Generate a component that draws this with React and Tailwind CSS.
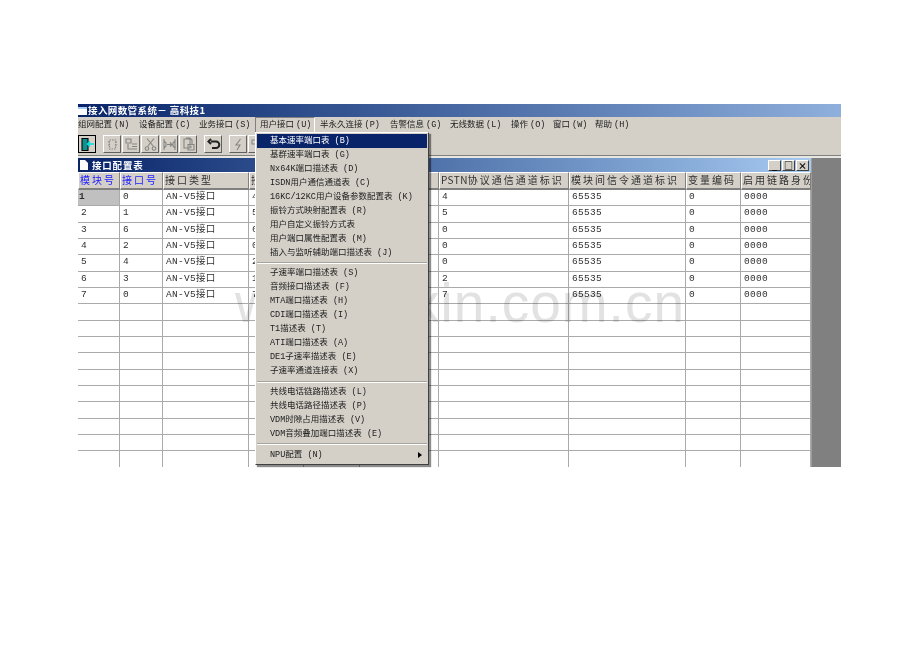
const cols = "grid grid-cols-[42px_43px_86px_55px_56px_79px_130px_117px_55px_70px]";
const headers = [["模块号", true], ["接口号", true], ["接口类型"], ["接"], [""], ["号"], ["PSTN", false, "协议通信通道标识"], ["模块间信令通道标识"], ["变量编码"], ["启用链路身份"]];
const data = [
  ["1", "0", "4", "4"], ["2", "1", "5", "5"], ["3", "6", "6", "0"], ["4", "2", "0", "0"],
  ["5", "4", "2", "0"], ["6", "3", "1", "2"], ["7", "0", "7", "7"],
];
const menu = [
  ["基本速率端口表 (B)", true], ["基群速率端口表 (G)"], ["Nx64K端口描述表 (D)"], ["ISDN用户通信通道表 (C)"],
  ["16KC/12KC用户设备参数配置表 (K)"], ["振铃方式映射配置表 (R)"], ["用户自定义振铃方式表"], ["用户端口属性配置表 (M)"], ["插入与监听辅助端口描述表 (J)"], null,
  ["子速率端口描述表 (S)"], ["音频接口描述表 (F)"], ["MTA端口描述表 (H)"], ["CDI端口描述表 (I)"], ["T1描述表 (T)"], ["ATI端口描述表 (A)"], ["DE1子速率描述表 (E)"], ["子速率通道连接表 (X)"], null,
  ["共线电话链路描述表 (L)"], ["共线电话路径描述表 (P)"], ["VDM时隙占用描述表 (V)"], ["VDM音频叠加端口描述表 (E)"], null,
];
const menuBar = [
  ["组网配置 (N)", "w-[61px]"], ["设备配置 (C)", "w-[60px]"], ["业务接口 (S)", "w-[56px]"],
  ["用户接口 (U)", "w-[60px] h-[16px] flex items-center pl-[4px] border border-t-[#808080] border-l-[#808080] border-r-white border-b-white"],
  ["半永久连接 (P)", "w-[75px] pl-[5px]"], ["告警信息 (G)", "w-[60px]"], ["无线数据 (L)", "w-[61px]"], ["操作 (O)", "w-[42px]"], ["窗口 (W)", "w-[42px]"], ["帮助 (H)", "w-[50px]"],
];
const mono = "font-['Liberation_Mono','Noto_Sans_CJK_SC',monospace]";

function Tool({ children, strong }) {
  return (
    <div className={`w-[18px] h-[18px] shrink-0 bg-[#d4d0c8] flex items-center justify-center border ${strong ? "border-black" : "border-t-white border-l-white border-r-[#606060] border-b-[#606060]"}`}>
      <svg width="15" height="15" viewBox="0 0 15 15" fill="none" stroke="#858581" strokeWidth="1.1">{children}</svg>
    </div>
  );
}

function Cell({ children, selected, last }) {
  return (
    <div className={`h-[16.33px] border-r border-[#aaaaaa] text-[9.5px] leading-[14px] tracking-[0.3px] text-[#303030] whitespace-nowrap overflow-hidden ${last ? "" : "border-b"} ${selected ? "bg-[#c0c0c0] font-bold pl-[1px]" : "bg-white pl-[3px]"}`}>
      {children}
    </div>
  );
}

export default function App() {
  return (
    <div className="w-[920px] h-[651px] bg-white overflow-hidden pt-[104px] pl-[78px] font-['Noto_Sans_CJK_SC','Liberation_Sans',sans-serif] text-[#202020]">
      <div className="relative w-[763px] h-[363px] flex flex-col bg-[#d4d0c8]">
        <div className="h-[13px] shrink-0 bg-gradient-to-r from-[#0a246a] to-[#8fb0dc] flex items-center text-white text-[9.5px] font-bold gap-[1px] tracking-[0.4px]">
          <div className="w-[9px] h-[8px] bg-white border-t-2 border-[#a6caf0]" />
          <span>接入网数管系统－ 高科技1</span>
        </div>
        <div className={`h-[16px] shrink-0 flex items-center text-[8.5px] leading-none whitespace-nowrap [word-spacing:-3px] ${mono}`}>
          {menuBar.map(([m, w]) => (
            <span key={m} className={w}>{m}</span>
          ))}
        </div>
        <div className="h-[22px] shrink-0 flex items-center gap-[1px]">
          <Tool strong>
            <path d="M2 1.5h6v12H2z" fill="#0f8f8f" stroke="#000000" />
            <path d="M14 7H7.5M10 4.5L7.5 7l2.5 2.5" stroke="#00e0e0" strokeWidth="1.5" />
          </Tool>
          <div className="w-[5px]" />
          <Tool><path d="M4.5 3h6v9h-6zM3 5h1.5M3 8h1.5M10.5 5H12M10.5 8H12" strokeDasharray="1.5 1" /></Tool>
          <Tool><path d="M2 2h5v4H2zM8 7h5M8 9.5h5M4 7v5h9" /></Tool>
          <Tool><path d="M4 1.5l6.5 8M11 1.5l-6.5 8" /><circle cx="4" cy="11.5" r="1.8" /><circle cx="11" cy="11.5" r="1.8" /></Tool>
          <Tool><path d="M2 2v11M13 2v11M5 7.5h4.5M8 5.5l2 2-2 2M2 4l2 2v3l-2 2M13 4l-2 2v3l2 2" /></Tool>
          <Tool><path d="M3 2h6v9H3zM5 1h4l2 2v4M7 7.5h6V13H7zM9 10h2" /></Tool>
          <div className="w-[5px]" />
          <Tool><path d="M5 4.5h5a3 3 0 010 6.5H6M5 2L2.5 4.5 5 7" stroke="#202020" strokeWidth="2" /></Tool>
          <div className="w-[5px]" />
          <Tool><path d="M9.5 2L5 8h4l-3 5" /></Tool>
          <Tool><path d="M2 3h5v4H2zM8 8h5v5H8z" /></Tool>
        </div>
        <div className="h-[3px] shrink-0 border-t border-[#808080] bg-[#e8e6e0]" />
        <div className="flex flex-1 min-h-0">
          <div className="w-[733px] flex flex-col overflow-hidden">
            <div className="h-[14px] shrink-0 bg-gradient-to-r from-[#0a246a] to-[#a6caf0] flex items-center text-white text-[9.5px] font-bold pl-[2px] gap-[4px] tracking-[0.8px]">
              <svg width="8" height="10" viewBox="0 0 8 10"><path d="M0 0h5l3 3v7H0z" fill="white" /></svg>
              <span>接口配置表</span>
              <div className="ml-auto flex gap-[1px] mr-[2px]">
                {["_", "□", "×"].map((c) => (
                  <span key={c} className="w-[13px] h-[11px] bg-[#d4d0c8] border border-t-white border-l-white border-r-[#404040] border-b-[#404040] text-black text-[9px] leading-[9px] text-center tracking-normal">{c}</span>
                ))}
              </div>
            </div>
            <div className={`${cols} h-[18px] shrink-0 bg-[#d4d0c8]`}>
              {headers.map(([h, blue, rest], i) => (
                <div key={i} className={`border-r border-b-2 border-r-[#808080] border-b-[#808080] border-t border-l border-t-white border-l-white pl-[1px] text-[10px] leading-[14px] tracking-[2px] whitespace-nowrap overflow-hidden ${blue ? "text-[#2020ff]" : "text-[#303030]"}`}>
                  {rest ? <span className="tracking-[0.4px]">{h}</span> : h}
                  {rest}
                </div>
              ))}
            </div>
            <div className={`${cols} bg-white ${mono}`}>
              {Array.from({ length: 17 }).map((_, r) => {
                const d = data[r];
                const vals = d ? [d[0], d[1], "AN-V5接口", d[2], "", "", d[3], "65535", "0", "0000"] : Array(10).fill("");
                return vals.map((v, c) => <Cell key={`${r}-${c}`} selected={r === 0 && c === 0} last={r === 16}>{v}</Cell>);
              })}
            </div>
          </div>
          <div className="flex-1 bg-[#808080] border-l border-[#a09c94]" />
        </div>

        <div className="absolute left-[157px] top-[172px] text-[55px] leading-none text-[#e2e2e2] font-['Liberation_Sans',sans-serif] mix-blend-multiply pointer-events-none whitespace-nowrap tracking-[1px]">
          www.zixin.com.cn
        </div>

        <div className={`absolute left-[177px] top-[28px] w-[174px] h-[333px] bg-[#d4d0c8] border border-t-white border-l-white border-r-[#404040] border-b-[#404040] shadow-[2px_2px_1px_rgba(0,0,0,0.45)] p-[1px] text-[8.5px] leading-none ${mono}`}>
          {menu.map((m, i) =>
            m ? (
              <div key={i} className={`h-[14px] flex items-center pl-[13px] whitespace-nowrap ${m[1] ? "bg-[#0a246a] text-white" : "text-[#202020]"}`}>{m[0]}</div>
            ) : (
              <div key={i} className="h-[6.6px] flex items-center"><div className="w-full h-[2px] border-t border-[#a8a49c] bg-white" /></div>
            )
          )}
          <div className="h-[14px] flex items-center justify-between pl-[13px] pr-[5px]">
            <span>NPU配置 (N)</span>
            <span className="w-0 h-0 border-y-[3px] border-y-transparent border-l-[4px] border-l-black" />
          </div>
        </div>
      </div>
    </div>
  );
}
